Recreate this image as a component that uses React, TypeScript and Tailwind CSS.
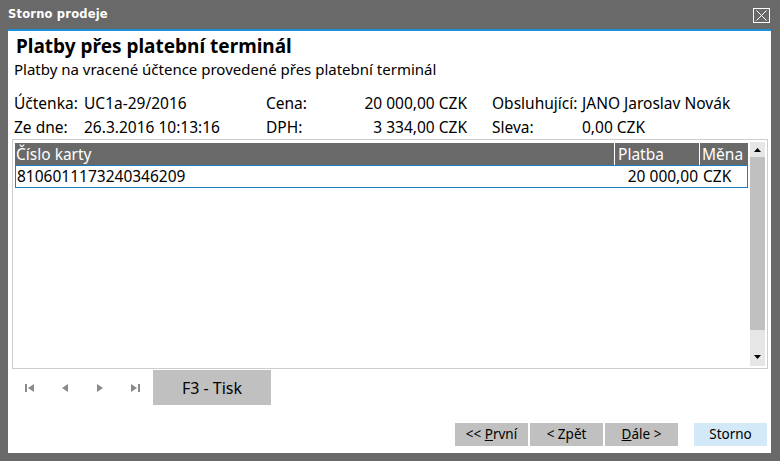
import React from "react";

const font = { fontFamily: '"Noto Sans", "Open Sans", sans-serif' };

function NavIcon({ kind }: { kind: "first" | "prev" | "next" | "last" }) {
  return (
    <svg width="10" height="8" viewBox="0 0 10 8" className="fill-[#8a8a8a]">
      {kind === "first" && (
        <>
          <rect x="0" y="0" width="2" height="8" />
          <polygon points="9,0 9,8 3,4" />
        </>
      )}
      {kind === "prev" && <polygon points="8,0 8,8 2,4" />}
      {kind === "next" && <polygon points="2,0 2,8 8,4" />}
      {kind === "last" && (
        <>
          <polygon points="1,0 1,8 7,4" />
          <rect x="8" y="0" width="2" height="8" />
        </>
      )}
    </svg>
  );
}

function WizardButton({
  children,
  light,
}: {
  children: React.ReactNode;
  light?: boolean;
}) {
  return (
    <div
      className={`w-[73px] h-[23px] flex items-center justify-center text-[13.5px] text-black ${
        light ? "bg-[#d3e9f7]" : "bg-[#c0c0c0]"
      }`}
    >
      {children}
    </div>
  );
}

export default function App() {
  return (
    <div
      className="w-[780px] h-[461px] bg-[#696969] flex flex-col overflow-hidden"
      style={font}
    >
      {/* title bar */}
      <div className="h-[29px] flex items-center justify-between pl-[8px] pr-[10px]">
        <span
          className="text-white text-[11.5px] font-bold"
          style={{ fontFamily: '"DejaVu Sans", sans-serif', letterSpacing: "0.2px" }}
        >
          Storno prodeje
        </span>
        <div className="w-[17px] h-[15px] border border-white flex items-center justify-center mt-[1px]">
          <svg width="13" height="11" viewBox="0 0 13 11" stroke="white" strokeWidth="1">
            <line x1="1.5" y1="0.5" x2="11.5" y2="10.5" />
            <line x1="11.5" y1="0.5" x2="1.5" y2="10.5" />
          </svg>
        </div>
      </div>
      <div className="h-[2px] bg-[#1d8fd4] ml-[8px] mr-[9px]" />

      {/* content */}
      <div className="flex-1 bg-white ml-[8px] mr-[9px] mb-[8px] flex flex-col text-black">
        <div className="h-[27px] flex items-end pl-[8px] text-[19px] font-bold leading-[24px]">
          Platby přes platební terminál
        </div>
        <div className="h-[22px] flex items-center pl-[6px] text-[15px]">
          Platby na vracené účtence provedené přes platební terminál
        </div>

        <div className="mt-[11px] pl-[6px] grid grid-cols-[70px_182px_64px_137px_25px_90px_1fr] text-[15.5px] leading-[24px]">
          <span>Účtenka:</span>
          <span>UC1a-29/2016</span>
          <span>Cena:</span>
          <span className="text-right">20 000,00 CZK</span>
          <span />
          <span>Obsluhující:</span>
          <span>JANO Jaroslav Novák</span>

          <span>Ze dne:</span>
          <span>26.3.2016 10:13:16</span>
          <span>DPH:</span>
          <span className="text-right">3 334,00 CZK</span>
          <span />
          <span>Sleva:</span>
          <span>0,00 CZK</span>
        </div>

        {/* grid with payments */}
        <div className="ml-[4px] mr-[3px] h-[230px] border border-[#cdcdcd] flex pt-[3px] px-[2px] pb-[2px]">
          <div className="flex-1 flex flex-col">
            <div className="h-[22px] bg-[#696969] text-white flex text-[15.5px] leading-[22px]">
              <div className="w-[600px] pl-[1px] border-r border-white">Číslo karty</div>
              <div className="w-[85px] pl-[3px] border-r border-white">Platba</div>
              <div className="flex-1 pl-[2px]">Měna</div>
            </div>
            <div className="h-[23px] border border-[#1b7fc4] flex text-[15.5px] leading-[21px]">
              <div className="w-[599px] pl-[1px]">8106011173240346209</div>
              <div className="w-[85px] text-right pr-[2px]">20 000,00</div>
              <div className="flex-1 pl-[3px]">CZK</div>
            </div>
          </div>
          <div className="w-[15px] ml-[2px] -mt-[1px] bg-[#e6e6e6] flex flex-col items-center">
            <div className="h-[15px] flex items-center justify-center">
              <svg width="7" height="4" viewBox="0 0 7 4">
                <polygon points="3.5,0 7,4 0,4" fill="black" />
              </svg>
            </div>
            <div className="w-[15px] h-[173px] bg-[#c0c0c0]" />
            <div className="flex-1" />
            <div className="h-[19px] flex items-center justify-center">
              <svg width="7" height="4" viewBox="0 0 7 4">
                <polygon points="0,0 7,0 3.5,4" fill="black" />
              </svg>
            </div>
          </div>
        </div>

        {/* record navigation and print */}
        <div className="h-[36px] flex items-center pl-[17px]">
          <div className="flex items-center gap-[25px] pt-[1px]">
            <NavIcon kind="first" />
            <NavIcon kind="prev" />
            <NavIcon kind="next" />
            <NavIcon kind="last" />
          </div>
          <div className="w-[118px] h-[35px] mt-[1px] ml-[13px] bg-[#c0c0c0] flex items-center justify-center text-[16px]">
            F3 - Tisk
          </div>
        </div>

        <div className="flex-1" />

        {/* wizard buttons */}
        <div className="flex justify-end pr-[4px] pb-[7px]">
          <div className="flex gap-[2px]">
            <WizardButton>
              &lt;&lt;&nbsp;<span className="underline">P</span>rvní
            </WizardButton>
            <WizardButton>&lt; Zpět</WizardButton>
            <WizardButton>
              <span className="underline">D</span>ále &gt;
            </WizardButton>
          </div>
          <div className="ml-[16px]">
            <WizardButton light>Storno</WizardButton>
          </div>
        </div>
      </div>
    </div>
  );
}
